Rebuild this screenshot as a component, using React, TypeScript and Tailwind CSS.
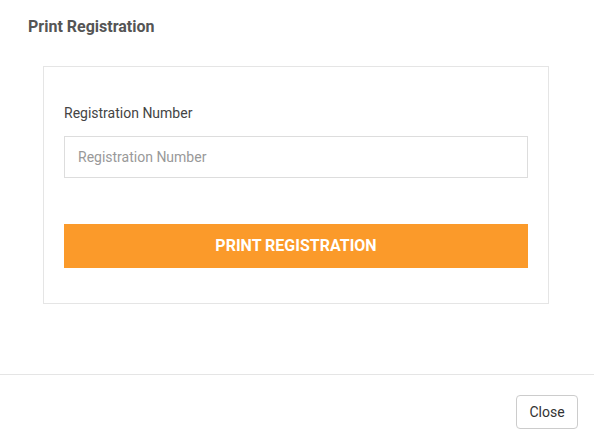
export default function App() {
  return (
    <div className="w-[594px] h-[442px] bg-white font-['Roboto',sans-serif] flex flex-col">
      {/* Header + body */}
      <div className="h-[374px] pt-[17px] px-[28px]">
        <h4 className="text-[16px] leading-5 font-bold text-[#555]">Print Registration</h4>
        <div className="mt-[29px] ml-[15px] mr-[17px] border border-[#e5e5e5] px-5 pt-[37px] pb-[35px]">
          <label className="block text-[14px] leading-[18px] text-[#444]">Registration Number</label>
          <input
            type="text"
            placeholder="Registration Number"
            className="mt-[14px] w-full h-[42px] border border-[#ddd] px-[13px] text-[14px] text-[#333] placeholder:text-[#999] outline-none"
          />
          <button className="mt-[46px] w-full h-[44px] bg-[#fb9a2a] text-white text-[16px] font-bold uppercase">
            Print Registration
          </button>
        </div>
      </div>
      {/* Footer */}
      <div className="border-t border-[#e5e5e5] flex justify-end pt-[20px] pr-[16px]">
        <button className="w-[62px] h-[34px] border border-[#ccc] rounded-[4px] text-[14px] text-[#333] bg-white">
          Close
        </button>
      </div>
    </div>
  );
}
